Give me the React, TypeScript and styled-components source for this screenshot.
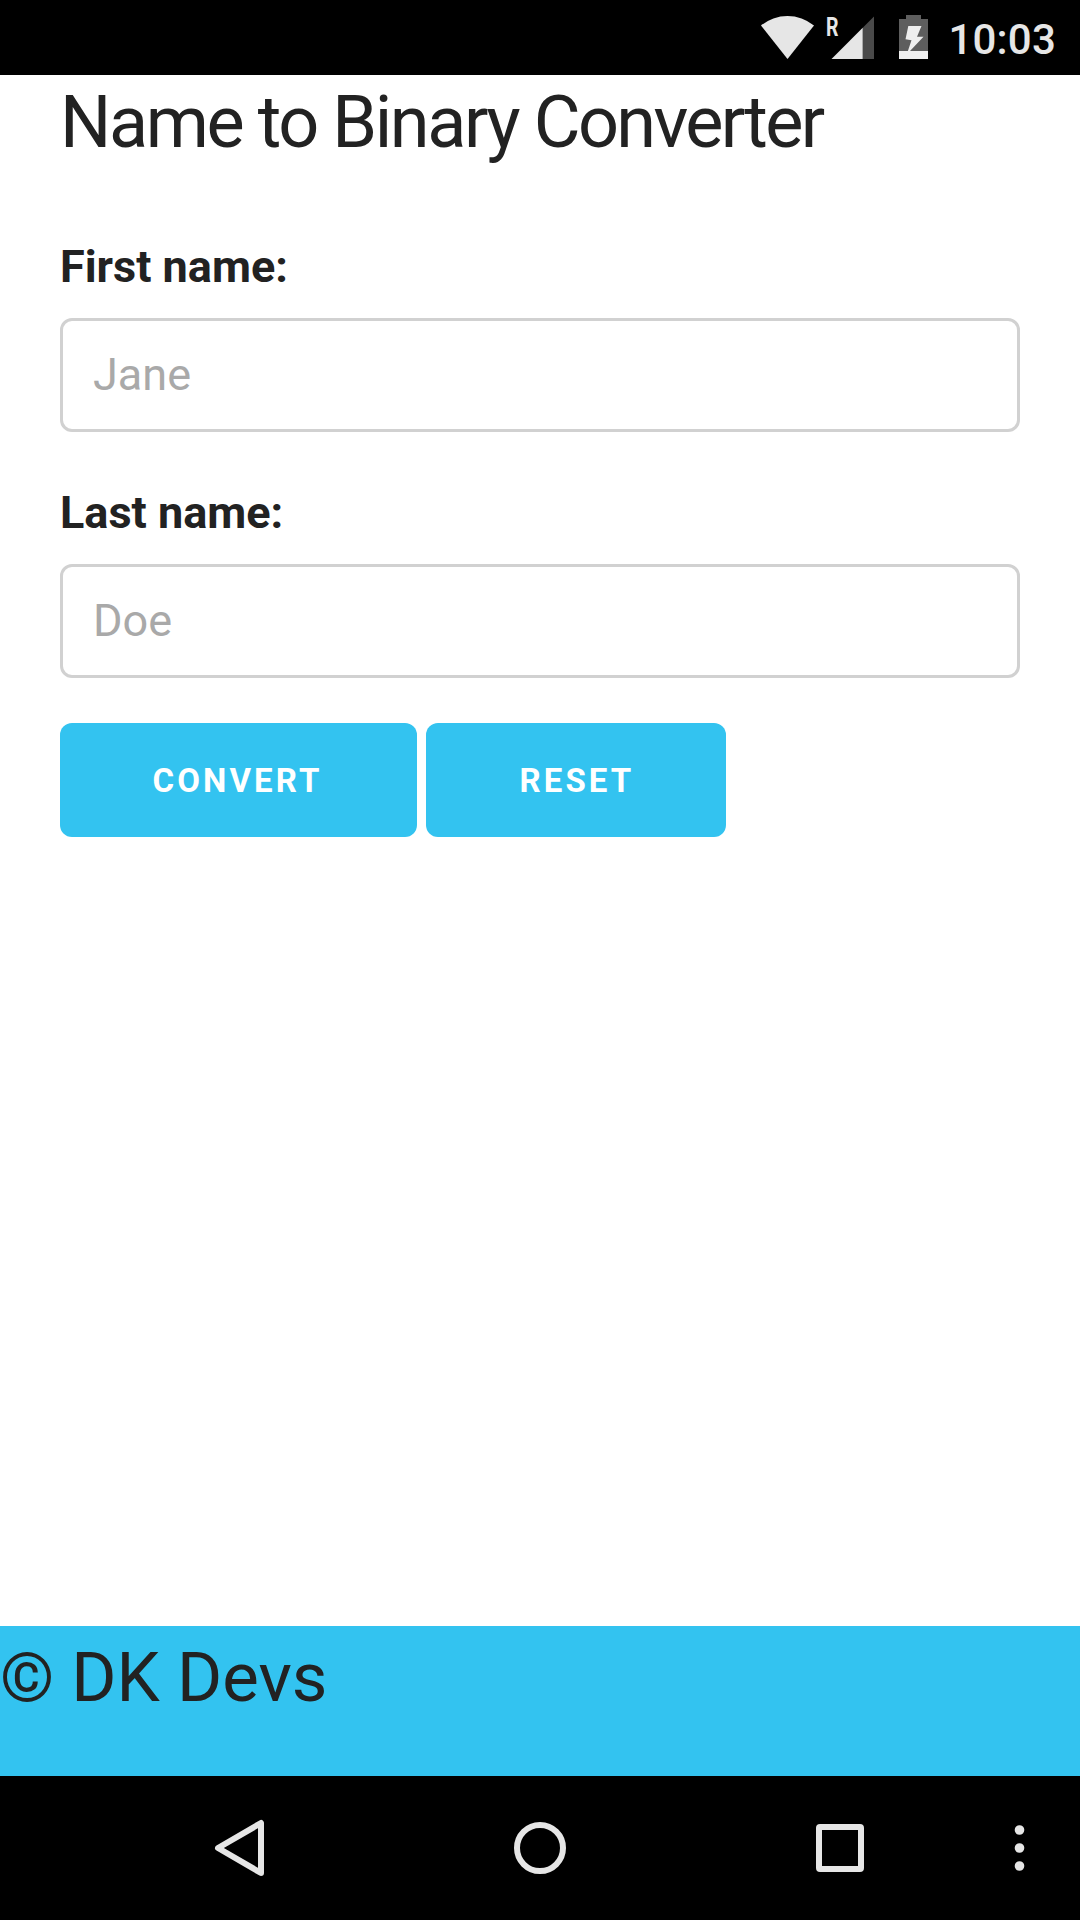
import React, { useState } from "react";
import styled, { createGlobalStyle } from "styled-components";

const GlobalStyle = createGlobalStyle`
  *, *::before, *::after { box-sizing: border-box; }
  body {
    margin: 0;
    background: #fff;
    color: #222;
    font: 400 45px/1.6 Roboto, "Noto Sans", sans-serif;
  }
`;

const Screen = styled.div`
  display: flex;
  flex-direction: column;
  width: 1080px;
  height: 1920px;
  overflow: hidden;
`;

const StatusBar = styled.header`
  display: flex;
  align-items: flex-start;
  justify-content: flex-end;
  flex: none;
  height: 75px;
  padding-right: 24px;
  background: #000;
`;

const StatusIcon = styled.svg`
  display: block;
  height: 75px;
`;

const RoamingLabel = styled.text`
  font: 700 26px Roboto, sans-serif;
  fill: #e6e6e6;
`;

const Clock = styled.span`
  margin-left: 18px;
  color: #e6e6e6;
  font-size: 42px;
  font-weight: 500;
  line-height: 80px;
  letter-spacing: 0.2px;
`;

const Content = styled.main`
  flex: 1;
  padding: 0 60px;
`;

const Title = styled.h4`
  margin: 0 0 60px;
  font-size: 72px;
  font-weight: 400;
  line-height: 96px;
  letter-spacing: -2.4px;
`;

const TightWord = styled.span`
  letter-spacing: -2.65px;
`;

const Field = styled.div`
  display: flex;
  flex-direction: column;
  gap: 15px;
  margin-bottom: 45px;
`;

const Label = styled.label`
  font-weight: 700;
  line-height: 72px;
`;

const TextInput = styled.input`
  width: 100%;
  height: 114px;
  padding: 17px 30px 19px;
  border: 3px solid #d1d1d1;
  border-radius: 12px;
  outline: 0;
  background: #fff;
  color: #222;
  font: inherit;
  line-height: normal;

  &::placeholder {
    color: #a9a9a9;
    opacity: 1;
  }
`;

const Actions = styled.div`
  display: flex;
  gap: 9px;
`;

const Button = styled.button<{ $width: number; $inset: number }>`
  width: ${({ $width }) => $width}px;
  height: 114px;
  padding: 1px 0 0 ${({ $inset }) => $inset}px;
  border: 0;
  border-radius: 12px;
  background: #33c3f0;
  color: #fff;
  font-family: inherit;
  font-size: 33px;
  font-weight: 700;
  line-height: 113px;
  letter-spacing: 3.1px;
  text-align: left;
  text-transform: uppercase;
`;

const Footer = styled.footer`
  flex: none;
  height: 150px;
  background: #33c3f0;
  font-size: 69px;
  line-height: 104px;
`;

const NavBar = styled.nav`
  flex: none;
  display: flex;
  height: 144px;
  padding-left: 90px;
  background: #000;
`;

const NavButton = styled.button<{ $width: number }>`
  display: flex;
  width: ${({ $width }) => $width}px;
  height: 144px;
  align-items: center;
  justify-content: center;
  padding: 0;
  border: 0;
  background: none;
`;

function WifiIcon() {
  return (
    <StatusIcon width="66" viewBox="755 0 66 75">
      <path d="M761 25.5A41.7 41.7 0 0 1 814 25.5L787.5 59Z" fill="#e6e6e6" />
    </StatusIcon>
  );
}

function SignalIcon() {
  return (
    <StatusIcon width="65" viewBox="821 0 65 75">
      <path d="M874 16.5V59H862.5V28Z" fill="#4a4a4a" />
      <path d="M862.7 27.8V59H831.5Z" fill="#e6e6e6" />
      <RoamingLabel transform="translate(826 35.5) scale(.75 1)">R</RoamingLabel>
    </StatusIcon>
  );
}

function BatteryIcon() {
  return (
    <StatusIcon width="44" viewBox="886 0 44 75">
      <path d="M906 15H921V19H928V51H899V19H906Z" fill="#5e5e5e" />
      <path d="M899 51H928V59H899Z" fill="#eee" />
      <path d="M908.3 26H921.5L917 36.8H923.5L906.7 54.5L911.5 40.3L905.5 39.3Z" fill="#eee" />
    </StatusIcon>
  );
}

export default function App() {
  const [first, setFirst] = useState("");
  const [last, setLast] = useState("");
  const reset = () => {
    setFirst("");
    setLast("");
  };
  return (
    <>
      <GlobalStyle />
      <Screen>
        <StatusBar>
          <WifiIcon />
          <SignalIcon />
          <BatteryIcon />
          <Clock>10:03</Clock>
        </StatusBar>
        <Content>
          <Title>
            Name to Binary <TightWord>Converter</TightWord>
          </Title>
          <Field>
            <Label htmlFor="first">First name:</Label>
            <TextInput id="first" placeholder="Jane" value={first} onChange={(e) => setFirst(e.target.value)} />
          </Field>
          <Field>
            <Label htmlFor="last">Last name:</Label>
            <TextInput id="last" placeholder="Doe" value={last} onChange={(e) => setLast(e.target.value)} />
          </Field>
          <Actions>
            <Button type="button" $width={357} $inset={92.5}>Convert</Button>
            <Button type="button" $width={300} $inset={93.5} onClick={reset}>Reset</Button>
          </Actions>
        </Content>
        <Footer>© DK Devs</Footer>
        <NavBar>
          <NavButton $width={300} aria-label="Back">
            <svg width="60" height="60" viewBox="210 1818 60 60" fill="none" stroke="#e6e6e6" strokeWidth="6" strokeLinejoin="round">
              <path d="M261 1823V1873L218 1848Z" />
            </svg>
          </NavButton>
          <NavButton $width={300} aria-label="Home">
            <svg width="60" height="60" viewBox="0 0 60 60" fill="none" stroke="#e6e6e6" strokeWidth="6">
              <circle cx="30" cy="30" r="23" />
            </svg>
          </NavButton>
          <NavButton $width={300} aria-label="Overview">
            <svg width="60" height="60" viewBox="0 0 60 60">
              <path fillRule="evenodd" fill="#e6e6e6" d="M10 6H50Q54 6 54 10V50Q54 54 50 54H10Q6 54 6 50V10Q6 6 10 6ZM12 12V48H48V12Z" />
            </svg>
          </NavButton>
          <NavButton $width={60} aria-label="Menu">
            <svg width="20" height="60" viewBox="0 0 20 60" fill="#e6e6e6">
              <circle cx="9.5" cy="12" r="4.8" />
              <circle cx="9.5" cy="30" r="4.8" />
              <circle cx="9.5" cy="48" r="4.8" />
            </svg>
          </NavButton>
        </NavBar>
      </Screen>
    </>
  );
}
